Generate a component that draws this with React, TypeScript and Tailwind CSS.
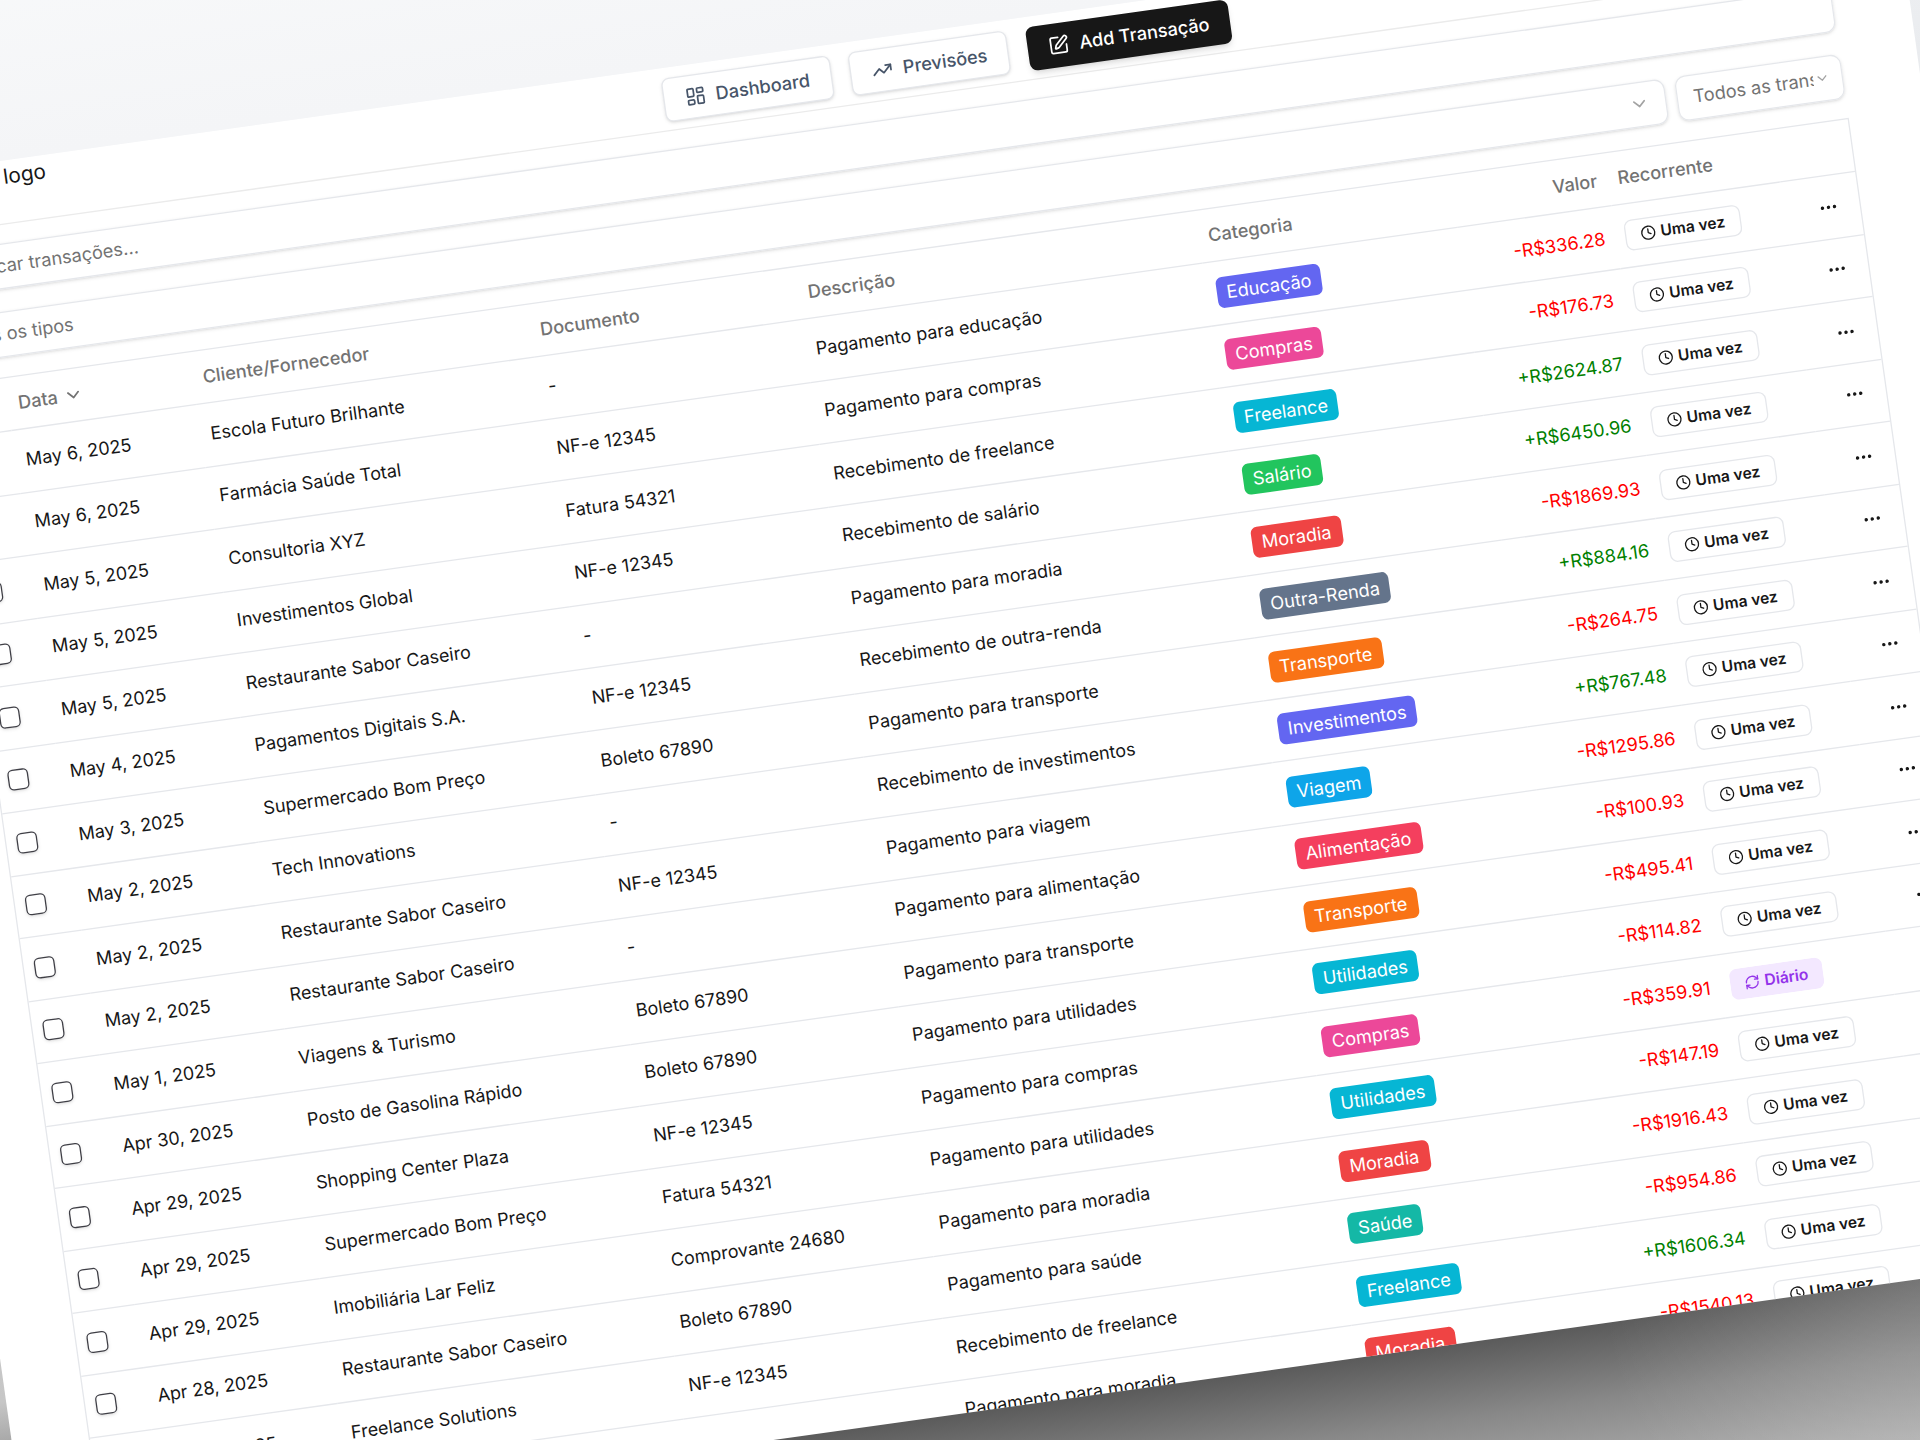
import {
  ChevronDown,
  Clock,
  Ellipsis,
  LayoutDashboard,
  RefreshCw,
  SquarePen,
  TrendingUp,
} from "lucide-react";

type Row = {
  date: string;
  client: string;
  doc: string;
  desc: string;
  cat: string;
  color: string;
  value: string;
  daily?: boolean;
};

const rows: Row[] = [
  { date: "May 6, 2025", client: "Escola Futuro Brilhante", doc: "-", desc: "Pagamento para educação", cat: "Educação", color: "bg-[#6366f1]", value: "-R$336.28" },
  { date: "May 6, 2025", client: "Farmácia Saúde Total", doc: "NF-e 12345", desc: "Pagamento para compras", cat: "Compras", color: "bg-[#ec4899]", value: "-R$176.73" },
  { date: "May 5, 2025", client: "Consultoria XYZ", doc: "Fatura 54321", desc: "Recebimento de freelance", cat: "Freelance", color: "bg-[#06b6d4]", value: "+R$2624.87" },
  { date: "May 5, 2025", client: "Investimentos Global", doc: "NF-e 12345", desc: "Recebimento de salário", cat: "Salário", color: "bg-[#22c55e]", value: "+R$6450.96" },
  { date: "May 5, 2025", client: "Restaurante Sabor Caseiro", doc: "-", desc: "Pagamento para moradia", cat: "Moradia", color: "bg-[#ef4444]", value: "-R$1869.93" },
  { date: "May 4, 2025", client: "Pagamentos Digitais S.A.", doc: "NF-e 12345", desc: "Recebimento de outra-renda", cat: "Outra-Renda", color: "bg-[#64748b]", value: "+R$884.16" },
  { date: "May 3, 2025", client: "Supermercado Bom Preço", doc: "Boleto 67890", desc: "Pagamento para transporte", cat: "Transporte", color: "bg-[#f97316]", value: "-R$264.75" },
  { date: "May 2, 2025", client: "Tech Innovations", doc: "-", desc: "Recebimento de investimentos", cat: "Investimentos", color: "bg-[#6366f1]", value: "+R$767.48" },
  { date: "May 2, 2025", client: "Restaurante Sabor Caseiro", doc: "NF-e 12345", desc: "Pagamento para viagem", cat: "Viagem", color: "bg-[#0ea5e9]", value: "-R$1295.86" },
  { date: "May 2, 2025", client: "Restaurante Sabor Caseiro", doc: "-", desc: "Pagamento para alimentação", cat: "Alimentação", color: "bg-[#f43f5e]", value: "-R$100.93" },
  { date: "May 1, 2025", client: "Viagens & Turismo", doc: "Boleto 67890", desc: "Pagamento para transporte", cat: "Transporte", color: "bg-[#f97316]", value: "-R$495.41" },
  { date: "Apr 30, 2025", client: "Posto de Gasolina Rápido", doc: "Boleto 67890", desc: "Pagamento para utilidades", cat: "Utilidades", color: "bg-[#06b6d4]", value: "-R$114.82" },
  { date: "Apr 29, 2025", client: "Shopping Center Plaza", doc: "NF-e 12345", desc: "Pagamento para compras", cat: "Compras", color: "bg-[#ec4899]", value: "-R$359.91", daily: true },
  { date: "Apr 29, 2025", client: "Supermercado Bom Preço", doc: "Fatura 54321", desc: "Pagamento para utilidades", cat: "Utilidades", color: "bg-[#06b6d4]", value: "-R$147.19" },
  { date: "Apr 29, 2025", client: "Imobiliária Lar Feliz", doc: "Comprovante 24680", desc: "Pagamento para moradia", cat: "Moradia", color: "bg-[#ef4444]", value: "-R$1916.43" },
  { date: "Apr 28, 2025", client: "Restaurante Sabor Caseiro", doc: "Boleto 67890", desc: "Pagamento para saúde", cat: "Saúde", color: "bg-[#14b8a6]", value: "-R$954.86" },
  { date: "Apr 28, 2025", client: "Freelance Solutions", doc: "NF-e 12345", desc: "Recebimento de freelance", cat: "Freelance", color: "bg-[#06b6d4]", value: "+R$1606.34" },
  { date: "Apr 27, 2025", client: "Imobiliária Lar Feliz", doc: "-", desc: "Pagamento para moradia", cat: "Moradia", color: "bg-[#ef4444]", value: "-R$1540.13" },
];

function Recurrence({ daily }: { daily?: boolean }) {
  if (daily) {
    return (
      <span className="inline-flex items-center gap-1 rounded-md border border-transparent bg-[#f3e8ff] px-[10px] py-[3px] text-xs font-semibold text-[#9333ea]">
        <RefreshCw className="h-3 w-3" />
        Diário
      </span>
    );
  }
  return (
    <span className="inline-flex items-center gap-1 rounded-md border border-[#e5e7eb] px-[11px] py-[3px] text-xs font-semibold text-[#171717]">
      <Clock className="h-3 w-3" />
      Uma vez
    </span>
  );
}

export default function App() {
  return (
    <div className="h-[1440px] w-[1920px] overflow-hidden bg-[radial-gradient(circle_at_1920px_1280px,rgba(255,255,255,0.16),rgba(255,255,255,0)_320px),linear-gradient(172deg,#f3f4f6_0%,#ebedf0_17%,#c6c6c6_82%,#5a5a5a_90.5%,#888888_95%,#b0b0b0_100%)] [font-family:Inter,sans-serif]">
      <div className="w-[1600px] origin-top-left [transform:matrix(1.2874,-0.1809,0.1809,1.2874,-200.8,-70.7)]">
        <div className="h-[198px] bg-linear-to-b from-[#f9fafb] to-[#f4f5f7]" />

        <div className="h-[1056.5px] overflow-hidden bg-white px-[59px]">
          <div className="flex h-[48.5px] items-start border-b border-[#ebebeb]">
            <div className="ml-[70px] w-[510.5px] text-base leading-6 text-[#171717]">logo</div>
            <div className="mt-[7.5px] flex gap-[14.5px]">
              <button className="flex h-[34.5px] items-center gap-2 rounded-md border border-[#e5e7eb] bg-white px-4 text-sm font-medium text-[#475569] shadow-sm">
                <LayoutDashboard className="h-4 w-4" />
                Dashboard
              </button>
              <button className="flex h-[34.5px] items-center gap-2 rounded-md border border-[#e5e7eb] bg-white px-4 text-sm font-medium text-[#475569] shadow-sm">
                <TrendingUp className="h-4 w-4" />
                Previsões
              </button>
              <button className="flex h-[34.5px] items-center gap-2 rounded-md bg-[#171717] px-4 text-sm font-medium text-white shadow-md">
                <SquarePen className="h-4 w-4" />
                Add Transação
              </button>
            </div>
          </div>

          <div className="mt-[14px] flex h-[35.5px] items-center rounded-lg border border-[#e5e7eb] pl-[29px] text-sm text-[#737373] shadow-sm">
            Buscar transações...
          </div>

          <div className="mt-[17px] flex h-[34.5px] gap-2">
            <div className="flex flex-1 items-center justify-between rounded-lg border border-[#e5e7eb] pl-[10px] pr-3 text-sm text-[#737373] shadow-sm">
              Todos os tipos
              <ChevronDown className="h-4 w-4 text-[#a3a3a3]" />
            </div>
            <div className="flex w-[129px] items-center gap-[1px] rounded-lg border border-[#e5e7eb] pl-[12px] text-sm text-[#737373] shadow-sm">
              <span className="w-[93px] overflow-hidden whitespace-nowrap">Todos as transações</span>
              <ChevronDown className="h-3 w-3 shrink-0 text-[#a3a3a3]" />
            </div>
          </div>

          <div className="mt-[15px] border border-[#e5e7eb]">
            <table className="w-full table-fixed border-collapse text-sm text-[#171717]">
              <colgroup>
                <col className="w-[48px]" />
                <col className="w-[143.5px]" />
                <col className="w-[262px]" />
                <col className="w-[208px]" />
                <col className="w-[311px]" />
                <col className="w-[198px]" />
                <col className="w-[120px]" />
                <col className="w-[131px]" />
                <col />
              </colgroup>
              <thead>
                <tr className="h-[41px] border-b border-[#e5e7eb] text-left text-[#737373]">
                  <th className="px-2 font-medium" />
                  <th className="px-2 font-medium">
                    <span className="flex items-center gap-1">
                      Data
                      <ChevronDown className="h-4 w-4" />
                    </span>
                  </th>
                  <th className="px-2 font-medium">Cliente/Fornecedor</th>
                  <th className="px-2 font-medium">Documento</th>
                  <th className="px-2 font-medium">Descrição</th>
                  <th className="px-2 font-medium">Categoria</th>
                  <th className="px-2 text-right font-medium">Valor</th>
                  <th className="px-2 font-medium">Recorrente</th>
                  <th className="px-2 font-medium" />
                </tr>
              </thead>
              <tbody>
                {rows.map((r, i) => (
                  <tr key={i} className="h-[48.5px] border-b border-[#e5e7eb]">
                    <td className="px-2">
                      <input
                        type="checkbox"
                        className="block h-4 w-4 appearance-none rounded-[4px] border border-[#3f3f46] shadow-sm"
                      />
                    </td>
                    <td className="px-2 text-[13.85px]">{r.date}</td>
                    <td className="px-2 text-[13.85px]">{r.client}</td>
                    <td className="px-2 text-[13.85px]">{r.doc}</td>
                    <td className="px-2 text-[13.85px]">{r.desc}</td>
                    <td className="px-2">
                      <span className={`inline-block rounded-[5px] px-2 py-0.5 text-white ${r.color}`}>{r.cat}</span>
                    </td>
                    <td className={`whitespace-nowrap px-2 text-right ${r.value.startsWith("+") ? "text-[#008000]" : "text-[#ff0000]"}`}>
                      {r.value}
                    </td>
                    <td className="py-0 pl-[7px] pr-2">
                      <Recurrence daily={r.daily} />
                    </td>
                    <td className="px-2">
                      <Ellipsis className="ml-auto mr-2 h-4 w-4" />
                    </td>
                  </tr>
                ))}
              </tbody>
            </table>
          </div>
        </div>
      </div>
    </div>
  );
}
